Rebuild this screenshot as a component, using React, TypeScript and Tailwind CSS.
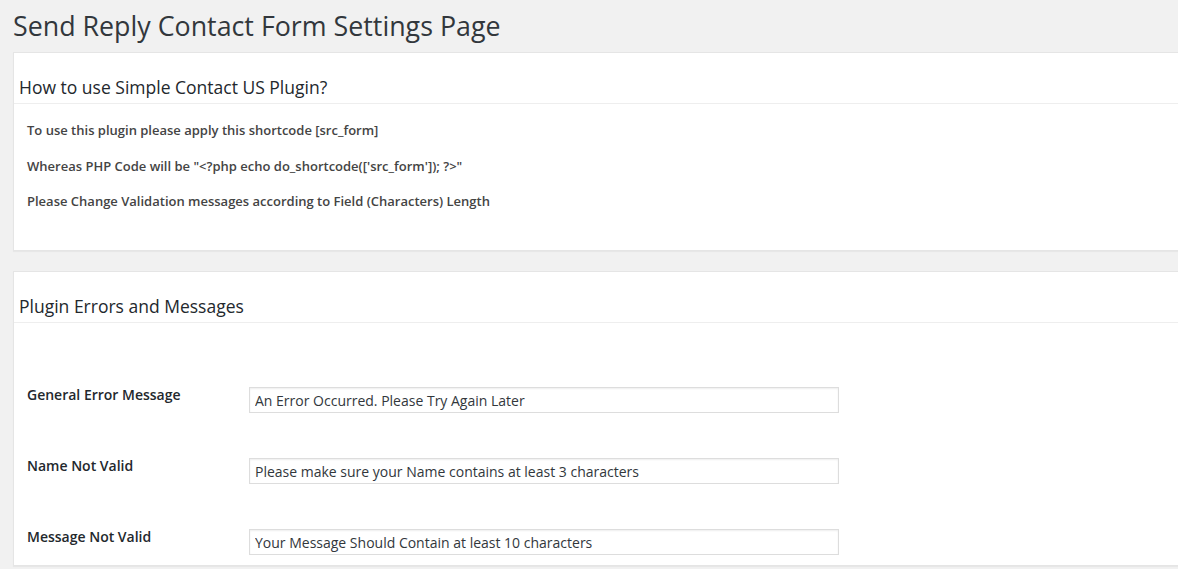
const fields = [
  { label: 'General Error Message', value: 'An Error Occurred. Please Try Again Later' },
  { label: 'Name Not Valid', value: 'Please make sure your Name contains at least 3 characters' },
  { label: 'Message Not Valid', value: 'Your Message Should Contain at least 10 characters' },
]

export default function App() {
  return (
    <div className="h-[569px] w-full overflow-hidden bg-[#f1f1f1] font-['Open_Sans',sans-serif] text-[#23282d]">
      <h1 className="ml-[13px] pt-[10px] text-[26.8px] leading-[32px] font-normal text-[#32373c]">
        Send Reply Contact Form Settings Page
      </h1>

      <div className="mt-[10px] ml-[13px] w-[1180px] border border-[#e5e5e5] bg-white shadow-[0_1px_1px_rgba(0,0,0,0.04)]">
        <div className="border-b border-[#eeeeee] pl-[5px] pt-[22px] pb-[4px]">
          <h2 className="text-[17.5px] leading-[24px] font-normal">How to use Simple Contact US Plugin?</h2>
        </div>
        <div className="flex flex-col gap-[17.5px] pl-[13px] pt-[17px] pb-[40px] text-[13px] leading-[18px] font-semibold text-[#444]">
          <p>To use this plugin please apply this shortcode [src_form]</p>
          <p>Whereas PHP Code will be "&lt;?php echo do_shortcode(['src_form']); ?&gt;"</p>
          <p>Please Change Validation messages according to Field (Characters) Length</p>
        </div>
      </div>

      <div className="mt-[20px] ml-[13px] w-[1180px] border border-[#e5e5e5] bg-white shadow-[0_1px_1px_rgba(0,0,0,0.04)]">
        <div className="border-b border-[#eeeeee] pl-[5px] pt-[22px] pb-[4px]">
          <h2 className="text-[17.5px] leading-[24px] font-normal">Plugin Errors and Messages</h2>
        </div>
        <div className="flex flex-col gap-[44px] pl-[13px] pt-[63px] pb-[10px]">
          {fields.map(f => (
            <div key={f.label} className="flex items-start">
              <label className="w-[222px] text-[14px] leading-[18px] font-semibold text-[#23282d]">{f.label}</label>
              <input
                type="text"
                defaultValue={f.value}
                className="mt-[1px] h-[26px] w-[590px] border border-[#dddddd] bg-white px-[5px] text-[14px] text-[#32373c] shadow-[inset_0_1px_2px_rgba(0,0,0,0.07)] outline-none"
              />
            </div>
          ))}
        </div>
      </div>
    </div>
  )
}
